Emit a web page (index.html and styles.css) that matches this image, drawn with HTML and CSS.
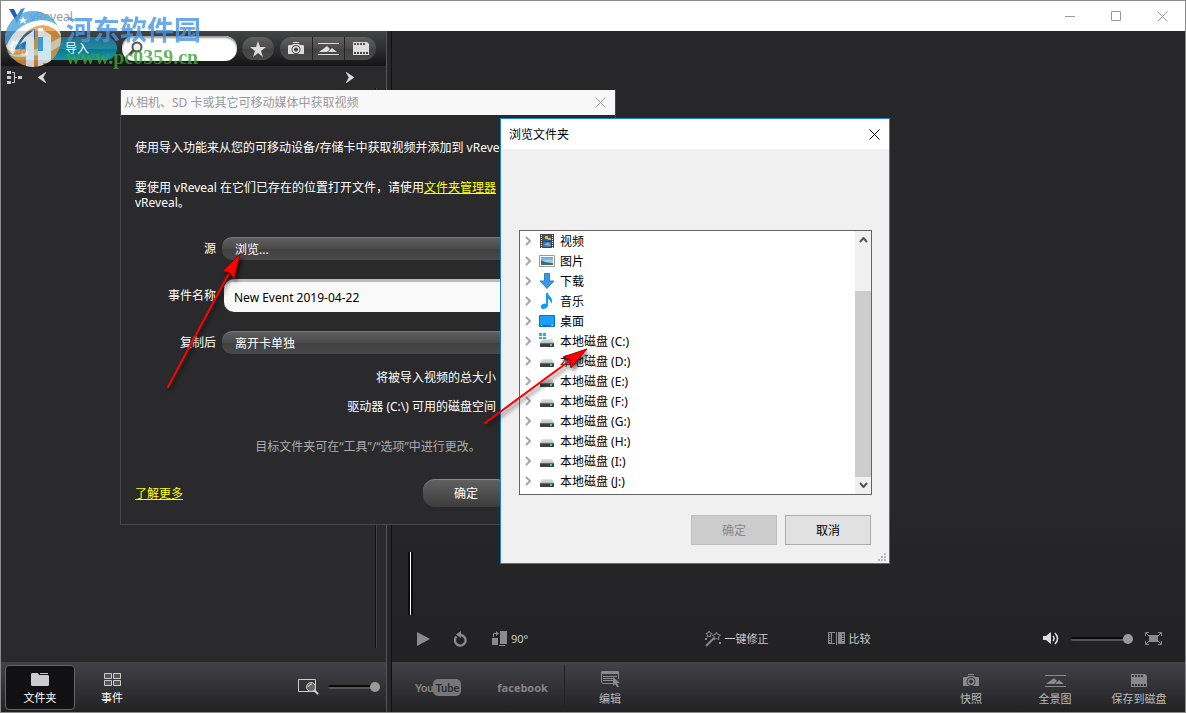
FILE: index.html
```
<!DOCTYPE html>
<html lang="zh-CN">
<head>
  <meta charset="UTF-8">
  <meta name="viewport" content="width=device-width, initial-scale=1.0">
  <title>vReveal</title>
  <link rel="stylesheet" href="styles.css">
</head>
<body>
  <!-- shared icons -->
  <svg class="defs" aria-hidden="true">
    <defs>
      <linearGradient id="drive-top" x1="0" y1="0" x2="0" y2="1">
        <stop offset="0" stop-color="#e4e6e8"/><stop offset="1" stop-color="#b9bdc1"/>
      </linearGradient>
      <linearGradient id="sky" x1="0" y1="0" x2="0" y2="1">
        <stop offset="0" stop-color="#5fa4e6"/><stop offset="1" stop-color="#e2f2fb"/>
      </linearGradient>
      <clipPath id="disc"><circle cx="28" cy="28" r="28"/></clipPath>
      <symbol id="camera" viewBox="0 0 16 13">
        <path fill="currentColor" fill-rule="evenodd" d="M5 0h6v1H5zM1 3h3l1-1h6l1 1h3l1 1v8H0V4zM8 3a4.500 4.500 0 1 0 0 9a4.500 4.500 0 1 0 0-9z"/>
        <circle cx="8" cy="7.500" r="2.800" fill="none" stroke="currentColor" stroke-width="1.500"/>
      </symbol>
      <symbol id="pano" viewBox="0 0 21 12">
        <path fill="currentColor" d="M0 0h21v1H0zM0 11h21v1H0zM1 9l8-6 3 3-3 3zM10 9l4-4 5 4z"/>
      </symbol>
      <symbol id="film" viewBox="0 0 16 13">
        <path fill="currentColor" fill-rule="evenodd" d="M0 0h14l2 2v11H0zM1 1v2h2V1zM4 1v2h2V1zM7 1v2h2V1zM10 1v2h2V1zM1 10v2h2v-2zM4 10v2h2v-2zM7 10v2h2v-2zM10 10v2h2v-2zM13 10v2h2v-2z"/>
      </symbol>
      <symbol id="close" viewBox="0 0 11 11">
        <path d="M.5.5l10 10M10.500.5l-10 10" fill="none" stroke="currentColor"/>
      </symbol>
      <symbol id="chevron" viewBox="0 0 6 10">
        <path d="M1 1l4 4-4 4" fill="none" stroke="#a6a6a6" stroke-width="2"/>
      </symbol>
      <symbol id="drive" viewBox="0 0 16 16">
        <path d="M3 6h10l2 4H1z" fill="url(#drive-top)"/>
        <path d="M1 10h14v4H1z" fill="#3c4043"/>
        <path d="M1 10h14v1H1z" fill="#666"/>
        <path d="M11 11h2v2h-2z" fill="#3ee24a"/>
      </symbol>
    </defs>
  </svg>

  <div class="window">
    <header class="titlebar">
      <svg class="app-icon" viewBox="0 0 16 16"><path d="M0 1h5l4 8-1 6z" fill="#2c5bb0"/><path d="M16 0l-4 1-5 8 1 6z" fill="#3a8bd8"/></svg>
      <span class="app-name">vReveal</span>
      <div class="window-buttons">
        <button aria-label="最小化"><svg width="10" height="11"><path d="M0 5.500h10" stroke="currentColor"/></svg></button>
        <button aria-label="最大化"><svg width="10" height="10"><path d="M.5.500h9v9h-9z" fill="none" stroke="currentColor"/></svg></button>
        <button aria-label="关闭"><svg width="11" height="11"><use href="#close"/></svg></button>
      </div>
    </header>

    <div class="workspace">
      <aside class="sidebar">
        <div class="toolbar">
          <button class="import">
            <svg class="gears" width="20" height="18" viewBox="0 0 20 18" fill="none" stroke="#e8eef2">
              <circle cx="7" cy="7" r="4" stroke-width="2"/><circle cx="7" cy="7" r="5.500" stroke-width="2" stroke-dasharray="2 2.300"/>
              <circle cx="15" cy="13" r="2" stroke-width="2"/><circle cx="15" cy="13" r="3.500" stroke-dasharray="1.500 1.500"/>
            </svg>
            导入
          </button>
          <label class="search">
            <svg width="15" height="15" viewBox="0 0 15 15"><circle cx="9" cy="6" r="4.500" fill="#eee" stroke="#555" stroke-width="2"/><path d="M6 9l-5 5" stroke="#555" stroke-width="3"/></svg>
            <input type="text" aria-label="搜索">
          </label>
          <button class="pill" aria-label="收藏"><svg width="16" height="16" viewBox="0 0 16 16"><path d="M8 0l2 6h6l-5 4 2 6-5-4-5 4 2-6-5-4h6z" fill="#ddd"/></svg></button>
          <div class="pill-group">
            <button aria-label="快照"><svg width="16" height="13"><use href="#camera"/></svg></button>
            <button aria-label="全景图"><svg width="21" height="12"><use href="#pano"/></svg></button>
            <button aria-label="视频"><svg width="16" height="13"><use href="#film"/></svg></button>
          </div>
        </div>
        <nav class="crumbs">
          <button aria-label="文件夹树"><svg width="15" height="13" viewBox="0 0 15 13"><path d="M0 0h4v3H0zM0 5h4v3H0zM0 10h4v3H0zM11 5h4v3h-4z" fill="#ccc"/><path d="M5 1.500h2.500v10H5M8 6.500h2" fill="none" stroke="#ccc"/></svg></button>
          <button aria-label="后退"><svg width="8" height="11" viewBox="0 0 8 11"><path d="M8 0L0 5.500 8 11 5 5.500z" fill="#ddd" stroke="#ddd" stroke-width=".5"/></svg></button>
          <button class="forward" aria-label="前进"><svg width="8" height="11" viewBox="0 0 8 11"><path d="M0 0l8 5.500L0 11l3-5.500z" fill="#ddd" stroke="#ddd" stroke-width=".5"/></svg></button>
        </nav>
        <div class="folder-pane"></div>
        <footer class="bar side-bar">
          <button class="tab active">
            <svg width="18" height="13" viewBox="0 0 18 13"><path d="M0 1l1-1h6l1 2h9l1 1v9l-1 1H1l-1-1zM9 0h8v1H9z" fill="#ccc"/></svg>
            文件夹
          </button>
          <button class="tab">
            <svg width="17" height="13" viewBox="0 0 17 13"><path d="M.5.500h7v5h-7zM9.500.5h7v5h-7zM.5 7.500h7v5h-7zM9.500 7.500h7v5h-7z" fill="#555" stroke="#ccc"/></svg>
            事件
          </button>
          <div class="thumb-size">
            <svg width="22" height="16" viewBox="0 0 22 16"><path d="M.5.500h17v12H.5z" fill="none" stroke="#ccc"/><path d="M16 11l4 4" stroke="#ccc" stroke-width="2"/><circle cx="13" cy="8" r="4.500" fill="#666" stroke="#ccc" stroke-width="1"/><path d="M10 8q1-3 4-3" stroke="#ddd" fill="none"/></svg>
            <input class="slider" type="range" aria-label="缩略图大小" value="100">
          </div>
        </footer>
      </aside>

      <main class="viewer">
        <div class="stage"><div class="playhead"></div></div>
        <div class="controls">
          <div class="transport">
            <button aria-label="播放"><svg width="13" height="14"><path d="M0 0l13 7-13 7z" fill="currentColor"/></svg></button>
            <button aria-label="重放"><svg width="14" height="16" viewBox="0 0 14 16"><path d="M2.500 5.500A5.300 5.300 0 1 0 7 4" fill="none" stroke="currentColor" stroke-width="2.300"/><path d="M7 0v7L2 3.500z" fill="currentColor"/></svg></button>
            <button><svg width="15" height="15" viewBox="0 0 15 15"><path d="M8 0h7v13H8zM0 7h6v7H0zM7 14h6v1H7zM4 0l3 2.500L4 5z" fill="currentColor"/><path d="M1.500 6V2.500H4" fill="none" stroke="currentColor"/></svg><span>90°</span></button>
          </div>
          <div class="fixes">
            <button><svg width="16" height="16" viewBox="0 0 16 16"><path d="M1 15l8-8" stroke="currentColor" stroke-width="2"/><path d="M11.500 1l1 2.500 3 .5-2 2 .5 2.500-2.500-1L9 8.500 9.500 6l-2-2 3-.5zM4 0l1 2 2 .5-1.500 1.500v2L4 5 2 6l.5-2L1 2.500 3 2z" fill="none" stroke="currentColor"/><path d="M0 7h2v2H0zM14 11h2v2h-2z" fill="currentColor"/></svg><span>一键修正</span></button>
            <button><svg width="17" height="13" viewBox="0 0 17 13"><path d="M0 .5h7M0 11.500h7M.5 0v12M3.500 0v12M8.500 0v13" fill="none" stroke="currentColor"/><path d="M1.500 2v9" stroke="currentColor" stroke-width="2" stroke-dasharray="1 1"/><path fill-rule="evenodd" d="M10 0h7v12h-7zM14 2v1h2V2zM14 4v1h2V4zM14 6v1h2V6zM14 8v1h2V8z" fill="currentColor"/></svg><span>比较</span></button>
          </div>
          <div class="volume">
            <button class="bright" aria-label="静音"><svg width="16" height="13" viewBox="0 0 16 13"><path d="M0 4h3l5-4v12L3 8H0z" fill="currentColor"/><path d="M10 4q2 2.500 0 5M12 1q5 5.500 0 11" fill="none" stroke="currentColor" stroke-width="1.500"/></svg></button>
            <input class="slider" type="range" aria-label="音量" value="100">
            <button aria-label="全屏"><svg width="17" height="13" viewBox="0 0 17 13"><path d="M4 3h9v7H4z" fill="currentColor"/><path d="M.5 4V.500H4M13 .5h3.500V4M.5 9v3.500H4M13 12.500h3.500V9M1 1l3 3M16 1l-3 3M1 12l3-3M16 12l-3-3" fill="none" stroke="currentColor"/></svg></button>
          </div>
        </div>
        <footer class="bar main-bar">
          <div class="share">
            <a href="#" class="youtube">You<span>Tube</span></a>
            <a href="#" class="facebook">facebook</a>
          </div>
          <button class="action edit"><svg width="19" height="16" viewBox="0 0 19 16"><path d="M1 0h16l1 1v2H0V1z" fill="currentColor"/><path d="M.5 3v8l1 1.500H12M17.500 3v5M2 5.500h14M2 7.500h12M2 9.500h10" fill="none" stroke="currentColor"/><path d="M12 6l7 6h-3l2 4h-2l-2-3-2 2z" fill="currentColor"/></svg>编辑</button>
          <div class="exports">
            <button class="action"><svg width="16" height="13"><use href="#camera"/></svg>快照</button>
            <button class="action"><svg width="21" height="12"><use href="#pano"/></svg>全景图</button>
            <button class="action"><svg width="16" height="13"><use href="#film"/></svg>保存到磁盘</button>
          </div>
        </footer>
      </main>
    </div>
  </div>

  <section class="dialog import-dialog">
    <header>
      <h2>从相机、SD 卡或其它可移动媒体中获取视频</h2>
      <button aria-label="关闭"><svg width="11" height="11"><use href="#close"/></svg></button>
    </header>
    <form>
      <p class="intro">使用导入功能来从您的可移动设备/存储卡中获取视频并添加到 vReveal。</p>
      <p>要使用 vReveal 在它们已存在的位置打开文件，请使用<a href="#">文件夹管理器</a><br>vReveal。</p>
      <div class="fields">
        <label for="source">源</label>
        <select id="source"><option>浏览...</option></select>
        <label for="event">事件名称</label>
        <input id="event" type="text" value="New Event 2019-04-22">
        <label for="after">复制后</label>
        <select id="after"><option>离开卡单独</option></select>
      </div>
      <div class="totals">
        <p>将被导入视频的总大小</p>
        <p>驱动器 (C:\) 可用的磁盘空间</p>
      </div>
      <p class="hint">目标文件夹可在“工具”/“选项”中进行更改。</p>
      <div class="form-footer">
        <a href="#">了解更多</a>
        <button type="button">确定</button>
      </div>
    </form>
  </section>

  <section class="dialog browse-dialog">
    <header>
      <h2>浏览文件夹</h2>
      <button aria-label="关闭"><svg width="11" height="11"><use href="#close"/></svg></button>
    </header>
    <div class="tree-box">
      <ul class="tree">
        <li><svg class="arrow"><use href="#chevron"/></svg><svg class="icon" viewBox="0 0 16 16"><path d="M1 1h14v14H1z" fill="#444"/><path d="M4 2h8v6H4z" fill="#3156a5"/><path d="M4 9h8v5H4z" fill="#3475c8"/><path d="M6 3h3v3H6zM9 5h3v2H9z" fill="#e2b93b"/><path d="M5 12l4-3 3 4z" fill="#9db95a"/><path d="M2.500 2v13M13.500 2v13" stroke="#fff" stroke-dasharray="1 1"/></svg>视频</li>
        <li><svg class="arrow"><use href="#chevron"/></svg><svg class="icon" viewBox="0 0 16 16"><path d="M.5 2.500h15v11H.5z" fill="#fff" stroke="#999"/><path d="M2 4h12v8H2z" fill="url(#sky)"/><path d="M2 7l4 2 8 1v2H2z" fill="#3d7168"/></svg>图片</li>
        <li><svg class="arrow"><use href="#chevron"/></svg><svg class="icon" viewBox="0 0 16 16"><path d="M5.500.5h5V8h4.500l-7 7.500L1 8h4.500z" fill="#3b97e8" stroke="#2b7fcc"/></svg>下载</li>
        <li><svg class="arrow"><use href="#chevron"/></svg><svg class="icon" viewBox="0 0 16 16"><path d="M7 0h2c0 3 5 4 4 9l-1 2c0-3-1-4-3-5v6c0 3-3 4-5 4-3 0-3-4 0-5q2-1 3 0z" fill="#149bf3"/></svg>音乐</li>
        <li><svg class="arrow"><use href="#chevron"/></svg><svg class="icon" viewBox="0 0 16 16"><path d="M.5 2.500h15v11H.5z" fill="#1a9fff" stroke="#0674c4"/><path d="M1 12h14v1H1z" fill="#0674c4"/><path d="M2 12h1v1H2zM12 12h2v1h-2z" fill="#fff"/></svg>桌面</li>
        <li><svg class="arrow"><use href="#chevron"/></svg><svg class="icon" viewBox="0 0 16 16"><use href="#drive"/><path d="M0 0h3v3H0zM4 0h3v3H4zM0 4h3v2H0zM4 4h3v2H4z" fill="#17b5ee"/></svg>本地磁盘 (C:)</li>
        <li><svg class="arrow"><use href="#chevron"/></svg><svg class="icon"><use href="#drive"/></svg>本地磁盘 (D:)</li>
        <li><svg class="arrow"><use href="#chevron"/></svg><svg class="icon"><use href="#drive"/></svg>本地磁盘 (E:)</li>
        <li><svg class="arrow"><use href="#chevron"/></svg><svg class="icon"><use href="#drive"/></svg>本地磁盘 (F:)</li>
        <li><svg class="arrow"><use href="#chevron"/></svg><svg class="icon"><use href="#drive"/></svg>本地磁盘 (G:)</li>
        <li><svg class="arrow"><use href="#chevron"/></svg><svg class="icon"><use href="#drive"/></svg>本地磁盘 (H:)</li>
        <li><svg class="arrow"><use href="#chevron"/></svg><svg class="icon"><use href="#drive"/></svg>本地磁盘 (I:)</li>
        <li><svg class="arrow"><use href="#chevron"/></svg><svg class="icon"><use href="#drive"/></svg>本地磁盘 (J:)</li>
      </ul>
      <div class="scrollbar">
        <svg width="9" height="6"><path d="M1 5l3.500-4L8 5" fill="none" stroke="#555" stroke-width="2"/></svg>
        <div class="scroll-thumb"></div>
        <svg width="9" height="6"><path d="M1 1l3.500 4L8 1" fill="none" stroke="#555" stroke-width="2"/></svg>
      </div>
    </div>
    <div class="buttons">
      <button disabled>确定</button>
      <button>取消</button>
    </div>
    <svg class="grip" width="8" height="8"><path d="M6 0h2v2H6zM3 3h2v2H3zM6 3h2v2H6zM0 6h2v2H0zM3 6h2v2H3zM6 6h2v2H6z" fill="#bbb"/></svg>
  </section>

  <!-- arrows drawn over the windows -->
  <svg class="pointers" width="600" height="440" viewBox="0 0 600 440">
    <g fill="#f00" stroke="#f00">
      <path d="M168 387l60-112" stroke-width="2" stroke-linecap="round"/>
      <path d="M240 254l-17 17 7 2 4 6z" stroke="#900"/>
      <path d="M485 423l87-64" stroke-width="2" stroke-linecap="round"/>
      <path d="M587 349l-24 8 7 3 1 8z" stroke="#900"/>
    </g>
  </svg>

  <div class="watermark">
    <svg width="56" height="56" viewBox="0 0 56 56">
      <g clip-path="url(#disc)">
        <path d="M0 0h56v56H0z" fill="#e8953a"/>
        <path d="M0 0h56v24q-8-12-20-12Q18 14 8 40L0 32z" fill="#4aa3df"/>
        <path d="M1 36Q10 12 36 9q12 0 20 9v8q-6-11-18-12Q18 15 8 44z" fill="#fff"/>
        <path d="M10 38Q18 20 30 18v10L20 34v4z" fill="#2a6fae"/>
        <path d="M20 26l9-7v37h-8V30l-6 3zM33 17h5v39h-5zM38 19l8 5v28h-8z" fill="#fff"/>
        <path d="M0 42q14 4 24-2 12-2 32-14v8Q40 46 24 45 10 48 0 42z" fill="#fff" opacity=".6"/>
        <path d="M33 26h5v14h-5z" fill="#4aa3df"/>
      </g>
      <path d="M18 5l1 3h3l-2 2 1 3-3-2-3 2 1-3-2-2h3z" fill="#fff"/>
    </svg>
    <div>
      <strong>河东软件园</strong>
      <span>www.pc0359.cn</span>
    </div>
  </div>
</body>
</html>
```
FILE: styles.css
```
* {
  box-sizing: border-box;
}
body {
  margin: 0;
  font-family: "Noto Sans", "Noto Sans CJK SC", sans-serif;
  font-size: 12px;
  line-height: 15px;
  color: #fff;
  background-color: #272729;
}
h2, p, ul {
  margin: 0;
  padding: 0;
  font-size: 12px;
  font-weight: normal;
}
button, input, select {
  font: inherit;
  color: inherit;
  margin: 0;
  padding: 0;
  border: none;
  background: none;
}
svg {
  display: block;
  flex: none;
}
.defs {
  position: absolute;
  width: 0;
  height: 0;
}

/* main window */
.window {
  display: flex;
  flex-direction: column;
  height: 100vh;
  border: 1px solid #8a8a8a;
}
.titlebar {
  display: flex;
  align-items: center;
  height: 30px;
  padding-left: 8px;
  background-color: #fff;
  color: #999;
}
.app-icon {
  width: 16px;
  height: 16px;
  margin-right: 5px;
}
.window-buttons {
  display: flex;
  margin-left: auto;
}
.window-buttons button {
  display: flex;
  align-items: center;
  justify-content: center;
  width: 46px;
  height: 30px;
}
.workspace {
  display: flex;
  flex: 1;
  min-height: 0;
}
.sidebar {
  display: flex;
  flex-direction: column;
  width: 386px;
  flex: none;
  background-color: #2a2a2c;
  border-right: 1px solid #555;
}
.toolbar {
  display: flex;
  align-items: center;
  gap: 5px;
  height: 35px;
  padding-left: 6px;
  background: linear-gradient(#424345, #2a2a2c 60%, #141415);
}
.import {
  display: flex;
  align-items: center;
  gap: 36px;
  width: 110px;
  height: 23px;
  border-radius: 12px;
  background: linear-gradient(#2a6f80, #1b8ba6 50%, #087590 51%, #1595b5);
}
.gears {
  margin-left: 2px;
}
.search {
  display: flex;
  align-items: center;
  width: 115px;
  height: 25px;
  padding-left: 6px;
  border-radius: 12px;
  background-color: #fff;
  box-shadow: inset 0 2px 2px #999;
}
.search input {
  width: 86px;
  color: #000;
}
.pill, .pill-group button {
  display: flex;
  align-items: center;
  justify-content: center;
  width: 32px;
  height: 23px;
  color: #ddd;
  background: linear-gradient(#606060, #4a4a4a 50%, #414141 51%, #4c4c4c);
}
.pill {
  border-radius: 12px;
}
.pill-group {
  display: flex;
  margin-left: 1px;
  border-radius: 12px;
  overflow: hidden;
}
.pill-group button + button {
  border-left: 1px solid #222;
}
.crumbs {
  display: flex;
  align-items: center;
  gap: 16px;
  height: 22px;
  padding: 0 32px 0 6px;
}
.crumbs .forward {
  margin-left: auto;
}
.folder-pane {
  flex: 1;
  margin: 0 10px 14px 0;
  border-right: 1px solid #111;
  box-shadow: 1px 0 #444;
}
.bar {
  display: flex;
  flex: none;
  height: 50px;
  background: linear-gradient(#424147, #222224);
}
.side-bar {
  align-items: center;
  padding: 0 6px 0 4px;
  gap: 2px;
}
.tab, .action {
  display: flex;
  flex-direction: column;
  align-items: center;
  justify-content: flex-end;
  gap: 4px;
  font-size: 11px;
}
.tab {
  width: 70px;
  height: 45px;
  padding-bottom: 4px;
  border: 1px solid transparent;
  border-radius: 4px;
}
.tab.active {
  border-color: #666;
  background-color: #111113;
}
.thumb-size {
  display: flex;
  align-items: center;
  gap: 8px;
  margin-left: auto;
}

.slider {
  appearance: none;
  width: 52px;
  height: 12px;
}
.slider::-webkit-slider-runnable-track {
  height: 4px;
  border-radius: 2px;
  border-top: 2px solid #0a0a0a;
  background-color: #555;
}
.slider::-webkit-slider-thumb {
  appearance: none;
  width: 10px;
  height: 10px;
  margin-top: -5px;
  border-radius: 50%;
  background-color: #999;
}

/* video area */
.viewer {
  display: flex;
  flex: 1;
  flex-direction: column;
  min-width: 0;
  margin-left: 4px;
  border-left: 1px solid #111;
  background: linear-gradient(#272729 70%, #202022);
}
.stage {
  display: flex;
  flex: 1;
  align-items: flex-end;
  padding-left: 16px;
}
.playhead {
  width: 5px;
  height: 63px;
  border: solid #0c0c0c;
  border-width: 0 2px;
  background-color: #fff;
}
.controls {
  display: grid;
  grid-template-columns: 1fr auto 1fr;
  align-items: center;
  height: 47px;
  padding: 0 23px 0 25px;
  color: #8a8a8a;
  font-size: 11px;
}
.controls button {
  display: flex;
  align-items: center;
  gap: 4px;
}
.controls button span {
  color: #ccc;
}
.transport, .fixes, .volume {
  display: flex;
  align-items: center;
}
.transport {
  gap: 24px;
}
.fixes {
  gap: 59px;
  margin-right: 4px;
}
.volume {
  justify-content: flex-end;
  gap: 12px;
}
.volume .slider {
  width: 62px;
}
.controls .bright {
  color: #ddd;
}
.main-bar {
  align-items: center;
}
.share {
  display: flex;
  align-items: center;
  gap: 36px;
  width: 173px;
  height: 44px;
  padding-left: 23px;
  border-right: 1px solid #222;
}
.share a {
  color: #858585;
  text-decoration: none;
  font-family: "Open Sans", sans-serif;
  font-size: 11px;
  font-weight: bold;
}
.share .youtube {
  display: flex;
  align-items: center;
  font-family: Lato, sans-serif;
}
.youtube span {
  padding: 1px 2px;
  border-radius: 5px;
  background-color: #777;
  color: #2c2c2e;
}
.action {
  height: 45px;
  padding-bottom: 4px;
  color: #bbb;
}
.action svg {
  color: #8a8a8a;
}
.edit {
  margin-left: 34px;
}
.exports {
  display: flex;
  gap: 24px;
  margin-left: auto;
  margin-right: 16px;
}
.exports .action {
  width: 60px;
}

/* dialogs */
.dialog {
  position: absolute;
}
.dialog header {
  display: flex;
  align-items: center;
  justify-content: space-between;
}
.import-dialog {
  left: 120px;
  top: 90px;
  width: 496px;
  height: 435px;
  border: 1px solid #48484a;
  border-top: none;
  background-color: #2a2a2c;
}
.import-dialog header {
  height: 25px;
  padding: 0 9px 0 3px;
  background-color: #f8f8f8;
  color: #999;
}
.import-dialog form {
  padding: 25px 14px 0;
}
.import-dialog a {
  color: #ff0;
}
.import-dialog .intro {
  margin-bottom: 25px;
  white-space: nowrap;
}
.fields {
  display: grid;
  grid-template-columns: 81px 1fr;
  align-items: center;
  gap: 19px 6px;
  margin-top: 27px;
}
.fields label {
  text-align: right;
}
.fields select {
  appearance: none;
  height: 23px;
  padding-left: 13px;
  border-radius: 10px;
  border-top: 1px solid #777;
  background: linear-gradient(#5e5e5e, #494949 50%, #414141 51%, #494949);
}
.fields input {
  height: 33px;
  margin-left: 2px;
  padding-left: 10px;
  border-radius: 10px;
  border-top: 3px solid #bbb;
  background-color: #f9f9f9;
  color: #000;
}
.totals {
  display: grid;
  gap: 14px;
  width: 361px;
  margin-top: 16px;
  text-align: right;
}
.hint {
  margin-top: 25px;
  text-align: center;
  color: #aaa;
}
.form-footer {
  display: flex;
  align-items: center;
  justify-content: space-between;
  margin-top: 25px;
  padding-right: 92px;
}
.form-footer button {
  width: 86px;
  height: 28px;
  border-radius: 12px;
  border-top: 1px solid #888;
  background: linear-gradient(#606060, #3c3c3c);
}
.browse-dialog {
  left: 500px;
  top: 118px;
  width: 390px;
  border: 1px solid #1883d7;
  background-color: #f0f0f0;
  color: #000;
}
.browse-dialog header {
  height: 30px;
  padding: 0 9px 0 8px;
  background-color: #fff;
}
.tree-box {
  display: flex;
  height: 265px;
  margin: 81px 17px 0 18px;
  border: 1px solid #646464;
  background-color: #fff;
}
.tree {
  flex: 1;
  list-style: none;
}
.tree li {
  display: flex;
  align-items: center;
  height: 20px;
  padding-left: 5px;
}
.tree .arrow {
  width: 6px;
  height: 10px;
  margin-right: 8px;
}
.tree .icon {
  width: 16px;
  height: 16px;
  margin-right: 5px;
}
.scrollbar {
  display: flex;
  flex-direction: column;
  align-items: center;
  width: 16px;
  padding: 6px 0;
  background-color: #f0f0f0;
}
.scroll-thumb {
  flex: 1;
  width: 100%;
  margin: 48px 0 5px;
  background-color: #cdcdcd;
}
.buttons {
  display: flex;
  justify-content: flex-end;
  gap: 8px;
  padding: 20px 18px 18px;
}
.buttons button {
  width: 86px;
  height: 30px;
  border: 1px solid #adadad;
  background-color: #e1e1e1;
}
.buttons button:disabled {
  border-color: #bfbfbf;
  background-color: #ccc;
  color: #888;
}
.grip {
  position: absolute;
  right: 3px;
  bottom: 2px;
}

.pointers {
  position: absolute;
  left: 0;
  top: 0;
  pointer-events: none;
  filter: drop-shadow(2px 3px 2px rgba(0, 0, 0, 0.6));
}
.watermark {
  position: absolute;
  left: 5px;
  top: 11px;
  display: flex;
  gap: 5px;
  opacity: 0.8;
  pointer-events: none;
}
.watermark strong, .watermark span {
  display: block;
}
.watermark strong {
  font-family: "Noto Sans CJK SC", sans-serif;
  font-size: 27px;
  line-height: 36px;
  color: #4796e6;
}
.watermark span {
  font-family: "Liberation Serif", serif;
  font-size: 20px;
  font-weight: bold;
  line-height: 20px;
  color: #3fa535;
}
```
